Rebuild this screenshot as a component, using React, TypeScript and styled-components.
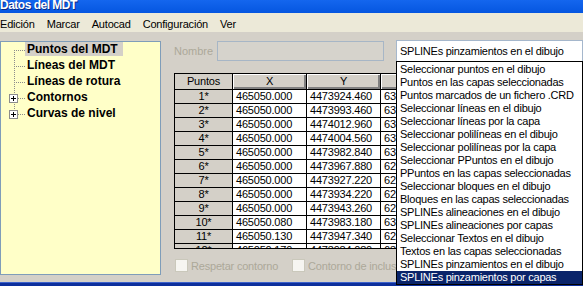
import React from "react";
import styled, { createGlobalStyle } from "styled-components";

const GlobalStyle = createGlobalStyle`
  html, body {
    margin: 0;
    padding: 0;
    background: #d4d0c8;
  }
  body {
    font-family: "Liberation Sans", Arial, sans-serif;
  }
`;

const menuItems = ["Edición", "Marcar", "Autocad", "Configuración", "Ver"];

const treeItems = [
    { label: "Puntos del MDT", selected: true, expandable: false },
    { label: "Líneas del MDT", selected: false, expandable: false },
    { label: "Líneas de rotura", selected: false, expandable: false },
    { label: "Contornos", selected: false, expandable: true },
    { label: "Curvas de nivel", selected: false, expandable: true },
];

const rows = [
    ["1*", "465050.000", "4473924.460", "63"],
    ["2*", "465050.000", "4473993.460", "63"],
    ["3*", "465050.000", "4474012.960", "63"],
    ["4*", "465050.000", "4474004.560", "63"],
    ["5*", "465050.000", "4473982.840", "63"],
    ["6*", "465050.000", "4473967.880", "62"],
    ["7*", "465050.000", "4473927.220", "62"],
    ["8*", "465050.000", "4473934.220", "62"],
    ["9*", "465050.000", "4473943.260", "62"],
    ["10*", "465050.080", "4473983.180", "63"],
    ["11*", "465050.130", "4473947.340", "62"],
    ["12*", "465050.170", "4473984.080", "63"],
];

const options = [
    "Seleccionar puntos en el dibujo",
    "Puntos en las capas seleccionadas",
    "Puntos marcados de un fichero .CRD",
    "Seleccionar líneas en el dibujo",
    "Seleccionar líneas por la capa",
    "Seleccionar polilíneas en el dibujo",
    "Seleccionar polilíneas por la capa",
    "Seleccionar PPuntos en el dibujo",
    "PPuntos en las capas seleccionadas",
    "Seleccionar bloques en el dibujo",
    "Bloques en las capas seleccionadas",
    "SPLINEs alineaciones en el dibujo",
    "SPLINEs alineaciones por capas",
    "Seleccionar Textos en el dibujo",
    "Textos en las capas seleccionadas",
    "SPLINEs pinzamientos en el dibujo",
    "SPLINEs pinzamientos por capas",
];

export default function App() {
    return (
        <>
            <GlobalStyle />
            <Window>
                <TitleBar>Datos del MDT</TitleBar>
                <MenuBar>
                    {menuItems.map((m) => (
                        <MenuItem key={m}>{m}</MenuItem>
                    ))}
                </MenuBar>
                <Body>
                    <TreePanel>
                        {treeItems.map((t, i) => (
                            <TreeRow key={t.label}>
                                <Connector
                                    $first={i === 0}
                                    $last={i === treeItems.length - 1}
                                >
                                    {t.expandable && <PlusBox />}
                                </Connector>
                                <TreeLabel $selected={t.selected}>{t.label}</TreeLabel>
                            </TreeRow>
                        ))}
                    </TreePanel>

                    <FormArea>
                        <NameRow>
                            <FieldLabel>Nombre</FieldLabel>
                            <NameInput />
                            <Combo>
                                SPLINEs pinzamientos en el dibujo
                                <OptionList>
                                    {options.map((o, i) => (
                                        <OptionItem
                                            key={o}
                                            $active={i === options.length - 1}
                                        >
                                            {o}
                                        </OptionItem>
                                    ))}
                                </OptionList>
                            </Combo>
                        </NameRow>

                        <Grid>
                            <HeadCell $flat>Puntos</HeadCell>
                            <HeadCell>X</HeadCell>
                            <HeadCell>Y</HeadCell>
                            {/* Z header sits under the open list */}
                            <HeadCell />
                            {rows.map((r) => (
                                <React.Fragment key={r[0]}>
                                    <RowHead>{r[0]}</RowHead>
                                    <DataCell>{r[1]}</DataCell>
                                    <DataCell>{r[2]}</DataCell>
                                    <DataCell>{r[3]}</DataCell>
                                </React.Fragment>
                            ))}
                        </Grid>

                        <CheckRow>
                            <CheckItem>
                                <CheckBox />
                                Respetar contorno
                            </CheckItem>
                            <CheckItem>
                                <CheckBox />
                                Contorno de inclusión
                            </CheckItem>
                        </CheckRow>
                    </FormArea>
                </Body>
                <BottomFrame />
            </Window>
        </>
    );
}

const Window = styled.div`
    width: 583px;
    height: 286px;
    overflow: hidden;
    display: flex;
    flex-direction: column;
    background: #d4d0c8;
`;

const TitleBar = styled.div`
    flex: none;
    height: 13px;
    overflow: hidden;
    background: linear-gradient(#1466ee, #0556e0);
    color: #fff;
    font: bold 12px "Liberation Sans", Arial, sans-serif;
    letter-spacing: -0.5px;
    line-height: 11px;
    text-shadow: 1px 1px #0a2a86;
    white-space: nowrap;
`;

const MenuBar = styled.div`
    flex: none;
    height: 19px;
    box-sizing: border-box;
    padding-top: 3px;
    margin-left: -6px;
    display: flex;
    background: #ece9d8;
`;

const MenuItem = styled.span`
    padding: 0 6px;
    font-size: 11px;
    letter-spacing: -0.2px;
    line-height: 16px;
    color: #000;
`;

const Body = styled.div`
    flex: 1;
    min-height: 0;
    display: flex;
    align-items: flex-start;
    padding-top: 9px;
`;

const TreePanel = styled.div`
    flex: none;
    width: 161px;
    height: 234px;
    box-sizing: border-box;
    border: 1px solid #7f9db9;
    background: #ffffc8;
`;

const TreeRow = styled.div`
    display: flex;
    align-items: flex-start;
    height: 16px;
`;

const Connector = styled.div<{ $first: boolean; $last: boolean }>`
    position: relative;
    flex: none;
    width: 24px;
    height: 16px;

    &::before {
        content: "";
        position: absolute;
        left: 13px;
        width: 1px;
        top: ${(p) => (p.$first ? "8px" : "0")};
        height: ${(p) => (p.$last ? "8px" : p.$first ? "8px" : "16px")};
        background: repeating-linear-gradient(to bottom, #8c8c8c 0 1px, transparent 1px 2px);
    }

    &::after {
        content: "";
        position: absolute;
        left: 13px;
        right: 0;
        top: 8px;
        height: 1px;
        background: repeating-linear-gradient(to right, #8c8c8c 0 1px, transparent 1px 2px);
    }
`;

const PlusBox = styled.span`
    position: absolute;
    z-index: 1;
    left: 8px;
    top: 4px;
    width: 9px;
    height: 9px;
    box-sizing: border-box;
    border: 1px solid #8c8c8c;
    background: #fff;

    &::before {
        content: "";
        position: absolute;
        left: 1px;
        top: 3px;
        width: 5px;
        height: 1px;
        background: #000;
    }

    &::after {
        content: "";
        position: absolute;
        left: 3px;
        top: 1px;
        width: 1px;
        height: 5px;
        background: #000;
    }
`;

const TreeLabel = styled.span<{ $selected: boolean }>`
    height: 14px;
    padding: 0 5px 0 2px;
    font: bold 12px "Liberation Sans", Arial, sans-serif;
    line-height: 15px;
    color: #000;
    white-space: nowrap;
    background: ${(p) => (p.$selected ? "#d4d0c8" : "transparent")};
`;

const FormArea = styled.div`
    flex: 1;
    min-width: 0;
    margin-top: -1px;
    padding-left: 13px;
    display: flex;
    flex-direction: column;
`;

const NameRow = styled.div`
    display: flex;
    align-items: center;
    height: 22px;
`;

const FieldLabel = styled.span`
    flex: none;
    width: 43px;
    font-size: 11px;
    color: #aca899;
`;

const NameInput = styled.div`
    flex: none;
    width: 167px;
    height: 20px;
    box-sizing: border-box;
    border: 1px solid #a7b6c6;
    background: #d6d3cc;
`;

const Combo = styled.div`
    position: relative;
    flex: none;
    width: 187px;
    height: 22px;
    margin-left: 12px;
    box-sizing: border-box;
    border: 1px solid #a5b7cc;
    background: #fff;
    padding-left: 3px;
    font-size: 11px;
    letter-spacing: -0.25px;
    line-height: 21px;
    color: #000;
    white-space: nowrap;
`;

const OptionList = styled.div`
    position: absolute;
    z-index: 5;
    top: 100%;
    left: -1px;
    width: 187px;
    box-sizing: border-box;
    border: 1px solid #000;
    background: #fff;
    padding-top: 1px;
`;

const OptionItem = styled.div<{ $active: boolean }>`
    height: 13px;
    padding-left: 3px;
    font-size: 11px;
    letter-spacing: -0.25px;
    line-height: 13px;
    white-space: nowrap;
    color: ${(p) => (p.$active ? "#fff" : "#000")};
    background: ${(p) => (p.$active ? "#0a246a" : "transparent")};
`;

const Grid = styled.div`
    margin-top: 11px;
    width: 281px;
    height: 176px;
    box-sizing: border-box;
    overflow: hidden;
    border: 1px solid #000;
    border-right: none;
    display: grid;
    grid-template-columns: 58px 74px 74px 74px;
    grid-template-rows: 16px;
    grid-auto-rows: 14px;
    font-size: 11px;
    letter-spacing: -0.2px;
    color: #000;
`;

const HeadCell = styled.div<{ $flat?: boolean }>`
    box-sizing: border-box;
    border-right: 1px solid #000;
    border-bottom: 1px solid #000;
    background: #d4d0c8;
    text-align: center;
    line-height: 15px;
    box-shadow: ${(p) => (p.$flat ? "none" : "inset 1px 1px #fff, inset -2px -2px #808080")};
`;

const RowHead = styled.div`
    box-sizing: border-box;
    border-right: 1px solid #000;
    border-bottom: 1px solid #000;
    background: #d4d0c8;
    text-align: center;
    line-height: 13px;
`;

const DataCell = styled.div`
    box-sizing: border-box;
    border-right: 1px solid #000;
    border-bottom: 1px solid #000;
    background: #fff;
    padding-left: 3px;
    line-height: 13px;
    white-space: nowrap;
    overflow: hidden;
`;

const CheckRow = styled.div`
    display: flex;
    align-items: center;
    gap: 14px;
    margin-top: 10px;
    height: 13px;
    padding-left: 1px;
`;

const CheckItem = styled.label`
    display: flex;
    align-items: center;
    gap: 3px;
    font-size: 11px;
    letter-spacing: -0.2px;
    color: #aca899;
    white-space: nowrap;
`;

const CheckBox = styled.span`
    flex: none;
    width: 13px;
    height: 13px;
    box-sizing: border-box;
    border: 1px solid #cac8bb;
    background: #f6f5f1;
`;

const BottomFrame = styled.div`
    flex: none;
    height: 4px;
    background: linear-gradient(#3c62cc 0 1px, #0d2f9c 1px);
`;
